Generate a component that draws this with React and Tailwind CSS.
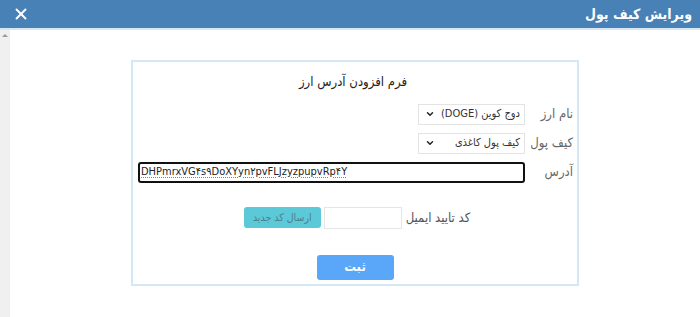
import React from "react";
import { ChevronDown, X } from "lucide-react";

const SelectBox = ({ value }) => (
  <div className="flex h-[21px] w-[107px] items-center justify-between whitespace-nowrap border border-[#e3e3e3] bg-white pr-[4px] pl-[6px] text-[11px] text-[#333]">
    <span>{value}</span>
    <ChevronDown size={10} strokeWidth={3.5} className="shrink-0 text-[#222]" />
  </div>
);

const Row = ({ label, children }) => (
  <div className="flex items-center">
    <div className="w-[48px] whitespace-nowrap text-[13px] text-[#666]">{label}</div>
    {children}
  </div>
);

const App = () => {
  return (
    <div className="h-[317px] w-[700px] overflow-hidden bg-white font-['DejaVu_Sans_Condensed','DejaVu_Sans',sans-serif]">
      {/* Header */}
      <header dir="rtl" className="flex h-[28px] items-center justify-between bg-[#4781b6] pr-[8px] pl-[12px]">
        <h1 className="text-[14px] font-bold text-white">ویرایش کیف پول</h1>
        <X size={18} strokeWidth={2.5} className="text-white" />
      </header>
      <div className="h-[2px] bg-[#d6e6f2]" />

      <div className="flex h-[287px]">
        {/* Scroll strip */}
        <div className="flex w-[10px] flex-col items-center bg-[#f0f0f0] pt-[4px]">
          <div className="h-0 w-0 border-x-[3px] border-b-[3px] border-x-transparent border-b-[#9a9a9a]" />
        </div>

        <div className="flex flex-1 justify-center pt-[30px]">
          {/* Card */}
          <div dir="rtl" className="flex h-[226px] w-[448px] flex-col border-2 border-[#d3e8f6] pt-[10px] pr-[4px]">
            <h2 className="text-center text-[13px] text-[#222]">فرم افزودن آدرس ارز</h2>

            <div className="mt-[12px] flex flex-col gap-[8px]">
              <Row label="نام ارز">
                <SelectBox value="دوج کوین (DOGE)" />
              </Row>
              <Row label="کیف پول">
                <SelectBox value="کیف پول کاغذی" />
              </Row>
              <Row label="آدرس">
                <div dir="ltr" className="flex h-[21px] w-[387px] items-center rounded-[3px] border-2 border-[#111] bg-white px-[1px] text-[11px] text-[#222]">
                  <span className="underline decoration-[#e25b5b] decoration-dotted underline-offset-2">
                    DHPmrxVG۴s۹DoXYyn۲pvFLJzyzpupvRp۴Y
                  </span>
                </div>
              </Row>
            </div>

            <div className="mt-[24px] flex items-center justify-center gap-[3px] pl-[8px]">
              <span className="ml-[1px] text-[13px] text-[#555]">کد تایید ایمیل</span>
              <div className="h-[22px] w-[78px] border border-[#e6e6e6] bg-white" />
              <button className="h-[21px] w-[77px] whitespace-nowrap rounded-[3px] bg-[#5cc9d8] text-[10.5px] text-[#4d7f88]">
                ارسال کد جدید
              </button>
            </div>

            <div className="mt-[26px] flex justify-center pl-[4px]">
              <button className="h-[25px] w-[77px] rounded-[3px] bg-[#5aa6f8] text-[13px] font-bold text-white">
                ثبت
              </button>
            </div>
          </div>
        </div>
      </div>
    </div>
  );
};

export default App;
